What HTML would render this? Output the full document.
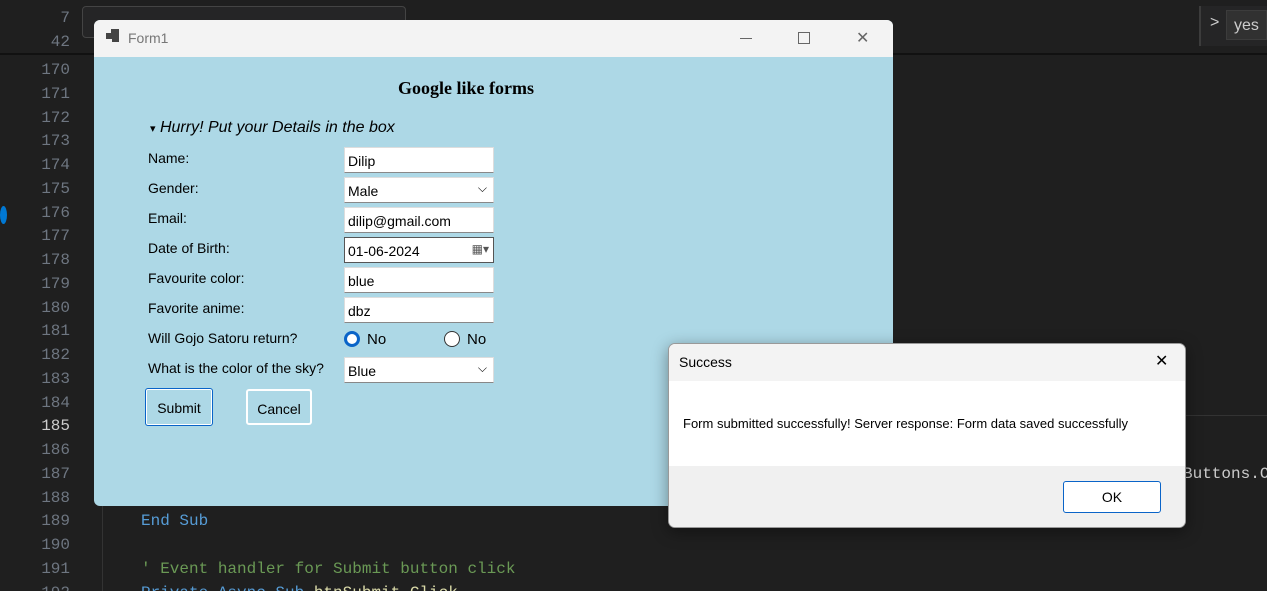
<!DOCTYPE html>
<html><head><style>
html,body{margin:0;width:1267px;height:591px;overflow:hidden}
body{background:#1f1f1f;position:relative;font-family:"Liberation Sans",sans-serif}
.a{position:absolute}
.ln{position:absolute;left:30px;width:40px;text-align:right;font:16px "Liberation Mono",monospace;color:#6e7681}
.code{position:absolute;font:16px "Liberation Mono",monospace}
.lbl{position:absolute;left:148px;font-size:14px;color:#000}
.box{position:absolute;left:344px;width:150px;height:26px;background:#fff;border:1px solid #ddd;border-bottom-color:#888;box-sizing:border-box;font-size:14px;padding:5px 0 0 3px}
</style></head><body>
<div class="a" style="left:0;top:0;width:1267px;height:53px;background:#1f1f1f;border-bottom:2px solid #111"></div>
<div class="ln" style="top:9px">7</div>
<div class="ln" style="top:33px">42</div>
<div class="a" style="left:82px;top:6px;width:322px;height:30px;border:1px solid #444;border-radius:4px;background:#252526"></div>
<div class="a" style="left:1199px;top:6px;width:68px;height:40px;border-left:2px solid #3c3c3c;background:#252526"></div>
<div class="a" style="left:1210px;top:14px;color:#ccc;font-size:16px">&gt;</div>
<div class="a" style="left:1226px;top:10px;width:41px;height:30px;background:#313131;border:1px solid #3c3c3c;color:#ccc;font-size:16px;padding:6px 0 0 7px;box-sizing:border-box">yes</div>
<div class="a" style="left:893px;top:415px;width:374px;height:1px;background:#333"></div>
<div class="a" style="left:102px;top:54px;width:1px;height:537px;background:#333"></div>
<div class="ln" style="top:61px">170</div><div class="ln" style="top:85px">171</div><div class="ln" style="top:109px">172</div><div class="ln" style="top:132px">173</div><div class="ln" style="top:156px">174</div><div class="ln" style="top:180px">175</div><div class="ln" style="top:204px">176</div><div class="ln" style="top:227px">177</div><div class="ln" style="top:251px">178</div><div class="ln" style="top:275px">179</div><div class="ln" style="top:299px">180</div><div class="ln" style="top:322px">181</div><div class="ln" style="top:346px">182</div><div class="ln" style="top:370px">183</div><div class="ln" style="top:394px">184</div><div class="ln" style="top:417px;color:#ccc">185</div><div class="ln" style="top:441px">186</div><div class="ln" style="top:465px">187</div><div class="ln" style="top:489px">188</div><div class="ln" style="top:512px">189</div><div class="ln" style="top:536px">190</div><div class="ln" style="top:560px">191</div><div class="ln" style="top:584px">192</div>
<div class="a" style="left:0;top:206px;width:7px;height:18px;border-radius:50%;background:#0078d4"></div>
<div class="code" style="left:141px;top:512px;color:#569cd6">End Sub</div>
<div class="code" style="left:141px;top:560px;color:#6a9955">' Event handler for Submit button click</div>
<div class="code" style="left:141px;top:584px;color:#569cd6">Private Async Sub <span style="color:#dcdcaa">btnSubmit_Click</span></div>
<div class="code" style="left:1183px;top:465px;color:#ccc">Buttons.O</div>

<div class="a" style="left:94px;top:20px;width:799px;height:486px;background:#add8e6;border-radius:6px;overflow:hidden">
<div class="a" style="left:0;top:0;width:799px;height:37px;background:#f3f3f3"></div>
<div class="a" style="left:12px;top:13px;width:7px;height:6px;background:#444"></div>
<div class="a" style="left:17px;top:9px;width:8px;height:8px;background:#444"></div>
<div class="a" style="left:18px;top:17px;width:7px;height:5px;background:#444"></div>
<div class="a" style="left:34px;top:10px;font-size:14px;color:#777">Form1</div>
<div class="a" style="left:646px;top:18px;width:12px;height:1px;background:#666"></div>
<div class="a" style="left:704px;top:12px;width:10px;height:10px;border:1px solid #666"></div>
<div class="a" style="left:762px;top:8px;font-size:16px;color:#666">✕</div>
</div>
<div class="a" style="left:398px;top:78px;font:bold 18px 'Liberation Serif',serif">Google like forms</div>
<div class="a" style="left:150px;top:119px;font-size:16px;font-style:italic"><span style="font-size:11px;font-style:normal">▾</span> Hurry! Put your Details in the box</div>
<div class="lbl" style="top:150px">Name:</div>
<div class="lbl" style="top:180px">Gender:</div>
<div class="lbl" style="top:210px">Email:</div>
<div class="lbl" style="top:240px">Date of Birth:</div>
<div class="lbl" style="top:270px">Favourite color:</div>
<div class="lbl" style="top:300px">Favorite anime:</div>
<div class="lbl" style="top:330px">Will Gojo Satoru return?</div>
<div class="lbl" style="top:360px">What is the color of the sky?</div>
<div class="box" style="top:147px">Dilip</div>
<div class="box" style="top:177px">Male<span style="position:absolute;right:6px;top:3px;font-size:12px">⌵</span></div>
<div class="box" style="top:207px">dilip@gmail.com</div>
<div class="box" style="top:237px;border:1px solid #555">01-06-2024<span style="position:absolute;right:4px;top:4px;font-size:12px;color:#555">▦▾</span></div>
<div class="box" style="top:267px">blue</div>
<div class="box" style="top:297px">dbz</div>
<div class="a" style="left:344px;top:331px;width:10px;height:10px;border:3px solid #0a64c8;border-radius:50%;background:#fff;box-shadow:inset 0 0 0 2px #fff"></div>
<div class="a" style="left:367px;top:331px;font-size:15px">No</div>
<div class="a" style="left:444px;top:331px;width:14px;height:14px;border:1px solid #333;border-radius:50%;background:#fff"></div>
<div class="a" style="left:467px;top:331px;font-size:15px">No</div>
<div class="box" style="top:357px">Blue<span style="position:absolute;right:6px;top:3px;font-size:12px">⌵</span></div>
<div class="a" style="left:145px;top:388px;width:66px;height:36px;border:1px solid #0a64c8;border-radius:3px;box-shadow:inset 0 0 0 1px #fff;font-size:14px;text-align:center;line-height:38px">Submit</div>
<div class="a" style="left:246px;top:389px;width:62px;height:32px;border:2px solid #fff;border-radius:3px;font-size:14px;text-align:center;line-height:36px">Cancel</div>

<div class="a" style="left:668px;top:343px;width:516px;height:183px;background:#fff;border:1px solid #999;border-radius:7px;overflow:hidden;box-shadow:0 4px 16px rgba(0,0,0,.4)">
<div class="a" style="left:0;top:0;width:516px;height:37px;background:#f3f3f3"></div>
<div class="a" style="left:10px;top:10px;font-size:14px">Success</div>
<div class="a" style="left:486px;top:7px;font-size:16px">✕</div>
<div class="a" style="left:14px;top:72px;font-size:13px">Form submitted successfully! Server response: Form data saved successfully</div>
<div class="a" style="left:0;top:122px;width:516px;height:61px;background:#f0f0f0"></div>
<div class="a" style="left:394px;top:137px;width:96px;height:30px;background:#fff;border:1px solid #0a64c8;border-radius:3px;font-size:14px;text-align:center;line-height:30px">OK</div>
</div>
</body></html>
